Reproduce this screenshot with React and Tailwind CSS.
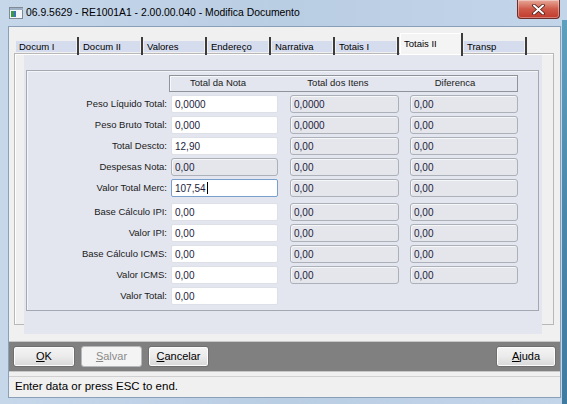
import React from "react";

const FONT = { fontFamily: '"Liberation Sans", Arial, sans-serif' };

const tabs = ["Docum I", "Docum II", "Valores", "Endereço", "Narrativa", "Totais I", "Totais II", "Transp"];

const rows = [
  { label: "Peso Líquido Total:", a: "0,0000", b: "0,0000", c: "0,00" },
  { label: "Peso Bruto Total:", a: "0,000", b: "0,0000", c: "0,00" },
  { label: "Total Descto:", a: "12,90", b: "0,00", c: "0,00" },
  { label: "Despesas Nota:", a: "0,00", ro: true, b: "0,00", c: "0,00" },
  { label: "Valor Total Merc:", a: "107,54", focus: true, b: "0,00", c: "0,00" },
  { label: "Base Cálculo IPI:", a: "0,00", b: "0,00", c: "0,00", gap: true },
  { label: "Valor IPI:", a: "0,00", b: "0,00", c: "0,00" },
  { label: "Base Cálculo ICMS:", a: "0,00", b: "0,00", c: "0,00" },
  { label: "Valor ICMS:", a: "0,00", b: "0,00", c: "0,00" },
  { label: "Valor Total:", a: "0,00" },
];

function Field({ value, width, ro, focus }) {
  const base = "h-[18px] flex items-center pl-[3px] text-[10px] text-[#1c1c3c] shrink-0";
  if (ro) {
    return (
      <div className={`${base} bg-[#e4e6ec] border border-[#acb0b8] rounded-[3px] shadow-[inset_1px_1px_0_#f6f7f9]`} style={{ width }}>
        {value}
      </div>
    );
  }
  return (
    <div
      className={`${base} bg-white rounded-[2px] border ${focus ? "border-[#7a9fcb]" : "border-[#dde0e6]"}`}
      style={{ width }}
    >
      {value}
      {focus && <span className="w-px h-[12px] bg-black ml-px" />}
    </div>
  );
}

function Tab({ label, active }) {
  if (active) {
    return (
      <div className="relative z-10 flex h-[21px] w-[64px] -mb-px">
        <div className="flex-1 bg-[#f4f4f4] border-t border-l border-white pl-[3px] pt-[5px] text-[9.5px] leading-[10px] text-black">
          {label}
        </div>
        <div className="w-[2px] h-[23px] bg-[#3c3c3c] mr-px" />
      </div>
    );
  }
  return (
    <div className="relative z-10 flex h-[16px] w-[64px] items-start">
      <div className="w-[60px] h-[11px] mt-[4px] bg-[#d4dcee] pl-[3px] text-[9.5px] leading-[12px] text-black overflow-hidden whitespace-nowrap">
        {label}
      </div>
      <div className="w-[2px] h-[18px] bg-[#3c3c3c] ml-px" />
    </div>
  );
}

function Button({ children, u, disabled, width }) {
  return (
    <div
      className={`h-[21px] flex items-center justify-center rounded-[3px] border text-[11px] ${
        disabled
          ? "border-[#b5b9bc] bg-[#f4f4f4] text-[#8a8a8a]"
          : "border-[#6f6f6f] bg-gradient-to-b from-[#f4f4f4] via-[#ebebeb] to-[#d8d8d8] text-black shadow-[inset_0_0_0_1px_#fcfcfc]"
      }`}
      style={{ width }}
    >
      <span>
        <span className="underline">{u}</span>
        {children}
      </span>
    </div>
  );
}

export default function App() {
  return (
    <div
      className="relative w-[567px] h-[404px] overflow-hidden bg-gradient-to-r from-[#c6d7ea] via-[#b9cde3] to-[#c3d5e9]"
      style={FONT}
    >
      {/* title bar */}
      <div className="h-[27px] flex items-center pl-[9px] pb-[1px]">
        <svg width="14" height="12" viewBox="0 0 14 12" className="mr-[3px]">
          <rect x="0.5" y="0.5" width="13" height="11" fill="#f4f6f8" stroke="#7f8a96" />
          <rect x="1" y="1" width="13" height="2" fill="#9fb1c4" />
          <rect x="2" y="4" width="3" height="6" fill="#3a9a4a" />
          <rect x="5" y="4" width="2" height="6" fill="#3f74b8" />
        </svg>
        <span className="text-[10.4px] text-black">
          06.9.5629 - RE1001A1 - 2.00.00.040 - Modifica Documento
        </span>
      </div>

      {/* close button */}
      <div className="absolute left-[517px] top-0 w-[43px] h-[19px] rounded-b-[4px] border border-t-0 border-[#6e2d28] bg-gradient-to-b from-[#e6a899] via-[#cf5a4a] to-[#c0392b] flex items-center justify-center shadow-[inset_0_0_0_1px_rgba(255,255,255,0.35)]">
        <svg width="13" height="11" viewBox="0 0 13 11">
          <path d="M2 1.5 L11 9.5 M11 1.5 L2 9.5" stroke="#4a1a16" strokeWidth="3.6" strokeLinecap="round" />
          <path d="M2 1.5 L11 9.5 M11 1.5 L2 9.5" stroke="#ffffff" strokeWidth="2" strokeLinecap="round" />
        </svg>
      </div>

      {/* right frame stripe */}
      <div className="absolute right-0 top-[20px] w-[5px] h-[384px] bg-gradient-to-b from-[#5f9fbe] via-[#4a88ab] to-[#3f7aa0]" />

      {/* client area */}
      <div className="ml-[8px] w-[551px] h-[370px] bg-[#f0f0f0] flex flex-col border border-[#8aa0b8] box-content -mt-px -ml-0">
        {/* tabs */}
        <div className="mt-[6px] h-[20px] pl-[7px] flex items-end">
          {tabs.map((t) => (
            <Tab key={t} label={t} active={t === "Totais II"} />
          ))}
        </div>

        {/* tab page */}
        <div className="ml-[5px] w-[540px] h-[272px] shrink-0 border border-[#b8b8b8] shadow-[inset_1px_1px_0_#ffffff] bg-[#f0f0f0]">
          <div className="ml-[9px] mt-px w-[518px] h-[279px] bg-[#e3e6ee] pt-[15px] pl-[2px]">
            <div className="w-[513px] h-[241px] border border-[#a3a8b2] shadow-[inset_1px_1px_0_#f4f5f8] pt-[4px]">
              {/* column headers */}
              <div className="ml-[142px] w-[349px] h-[17px] border border-[#8e939c] shadow-[inset_1px_1px_0_#f8f9fb] flex items-center text-[9.5px] text-[#1a1a1a]">
                <span className="w-[96px] text-center">Total da Nota</span>
                <span className="w-[144px] text-center">Total dos Itens</span>
                <span className="w-[90px] text-center">Diferenca</span>
              </div>

              {rows.map((r) => (
                <div key={r.label} className={`flex items-center ${r.gap ? "mt-[6px]" : "mt-[3px]"}`}>
                  <div className="w-[140px] text-right text-[9.5px] text-[#1a1a1a] shrink-0">{r.label}</div>
                  <div className="w-[4px] shrink-0" />
                  <Field value={r.a} width={107} ro={r.ro} focus={r.focus} />
                  {r.b && (
                    <>
                      <div className="w-[12px] shrink-0" />
                      <Field value={r.b} width={109} ro />
                      <div className="w-[11px] shrink-0" />
                      <Field value={r.c} width={108} ro />
                    </>
                  )}
                </div>
              ))}
            </div>
          </div>
        </div>

        {/* button bar */}
        <div className="mt-[16px] h-[31px] bg-[#808080] border-y border-[#c8c8c8] flex items-center px-[4px] gap-[6px]">
          <Button u="O" width={62}>K</Button>
          <Button u="S" disabled width={61}>alvar</Button>
          <Button u="C" width={61}>ancelar</Button>
          <div className="flex-1" />
          <Button u="A" width={60}>juda</Button>
        </div>

        {/* status bar */}
        <div className="mt-[4px] h-[21px] border-t border-[#d0d0d0] flex items-center pl-[6px] text-[11.5px] text-black">
          Enter data or press ESC to end.
        </div>
      </div>
    </div>
  );
}
